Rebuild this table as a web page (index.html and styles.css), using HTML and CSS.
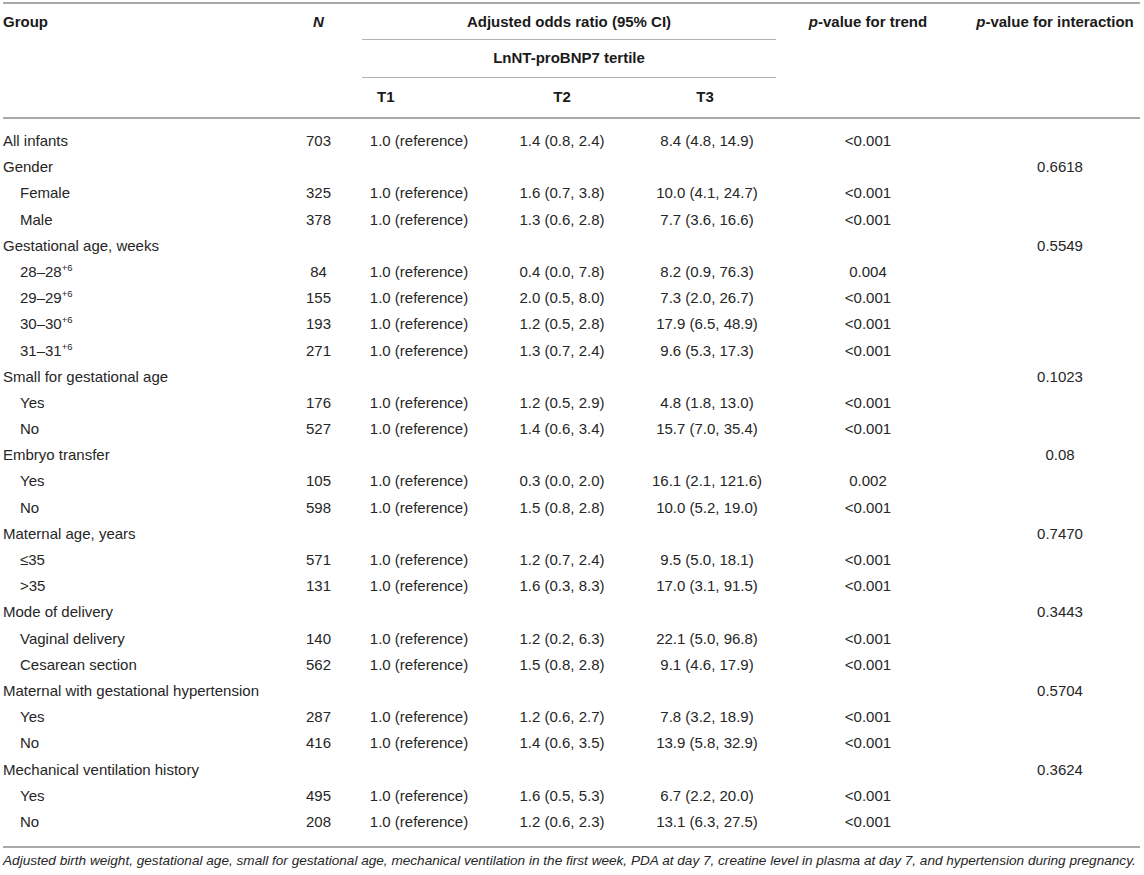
FILE: index.html
```html
<!DOCTYPE html>
<html lang="en">
<head>
<meta charset="utf-8">
<title>Adjusted odds ratio table</title>
<link rel="stylesheet" href="styles.css">
</head>
<body>
<div class="wrap">
<table class="tbl">
  <colgroup>
    <col class="c-group"><col class="c-n"><col class="c-t1"><col class="c-t2"><col class="c-t3"><col class="c-trend"><col class="c-int">
  </colgroup>
  <thead>
    <tr class="h1">
      <th rowspan="3" class="h-group">Group</th>
      <th rowspan="3" class="h-n"><i>N</i></th>
      <th colspan="3" class="h-span">Adjusted odds ratio (95% CI)</th>
      <th rowspan="3" class="h-trend"><i>p</i>-value for trend</th>
      <th rowspan="3" class="h-int"><i>p</i>-value for interaction</th>
    </tr>
    <tr class="h2">
      <th colspan="3" class="h-span">LnNT-proBNP7 tertile</th>
    </tr>
    <tr class="h3">
      <th class="h-t1">T1</th>
      <th class="h-t2">T2</th>
      <th class="h-t3">T3</th>
    </tr>
  </thead>
  <tbody>
    <tr class="first"><td class="g">All infants</td><td class="n">703</td><td class="t1">1.0 (reference)</td><td class="t2">1.4 (0.8, 2.4)</td><td class="t3">8.4 (4.8, 14.9)</td><td class="tr">&lt;0.001</td><td class="in"></td></tr>
    <tr><td class="g">Gender</td><td class="n"></td><td class="t1"></td><td class="t2"></td><td class="t3"></td><td class="tr"></td><td class="in">0.6618</td></tr>
    <tr><td class="g sub">Female</td><td class="n">325</td><td class="t1">1.0 (reference)</td><td class="t2">1.6 (0.7, 3.8)</td><td class="t3">10.0 (4.1, 24.7)</td><td class="tr">&lt;0.001</td><td class="in"></td></tr>
    <tr><td class="g sub">Male</td><td class="n">378</td><td class="t1">1.0 (reference)</td><td class="t2">1.3 (0.6, 2.8)</td><td class="t3">7.7 (3.6, 16.6)</td><td class="tr">&lt;0.001</td><td class="in"></td></tr>
    <tr><td class="g">Gestational age, weeks</td><td class="n"></td><td class="t1"></td><td class="t2"></td><td class="t3"></td><td class="tr"></td><td class="in">0.5549</td></tr>
    <tr><td class="g sub">28–28<sup>+6</sup></td><td class="n">84</td><td class="t1">1.0 (reference)</td><td class="t2">0.4 (0.0, 7.8)</td><td class="t3">8.2 (0.9, 76.3)</td><td class="tr">0.004</td><td class="in"></td></tr>
    <tr><td class="g sub">29–29<sup>+6</sup></td><td class="n">155</td><td class="t1">1.0 (reference)</td><td class="t2">2.0 (0.5, 8.0)</td><td class="t3">7.3 (2.0, 26.7)</td><td class="tr">&lt;0.001</td><td class="in"></td></tr>
    <tr><td class="g sub">30–30<sup>+6</sup></td><td class="n">193</td><td class="t1">1.0 (reference)</td><td class="t2">1.2 (0.5, 2.8)</td><td class="t3">17.9 (6.5, 48.9)</td><td class="tr">&lt;0.001</td><td class="in"></td></tr>
    <tr><td class="g sub">31–31<sup>+6</sup></td><td class="n">271</td><td class="t1">1.0 (reference)</td><td class="t2">1.3 (0.7, 2.4)</td><td class="t3">9.6 (5.3, 17.3)</td><td class="tr">&lt;0.001</td><td class="in"></td></tr>
    <tr><td class="g">Small for gestational age</td><td class="n"></td><td class="t1"></td><td class="t2"></td><td class="t3"></td><td class="tr"></td><td class="in">0.1023</td></tr>
    <tr><td class="g sub">Yes</td><td class="n">176</td><td class="t1">1.0 (reference)</td><td class="t2">1.2 (0.5, 2.9)</td><td class="t3">4.8 (1.8, 13.0)</td><td class="tr">&lt;0.001</td><td class="in"></td></tr>
    <tr><td class="g sub">No</td><td class="n">527</td><td class="t1">1.0 (reference)</td><td class="t2">1.4 (0.6, 3.4)</td><td class="t3">15.7 (7.0, 35.4)</td><td class="tr">&lt;0.001</td><td class="in"></td></tr>
    <tr><td class="g">Embryo transfer</td><td class="n"></td><td class="t1"></td><td class="t2"></td><td class="t3"></td><td class="tr"></td><td class="in">0.08</td></tr>
    <tr><td class="g sub">Yes</td><td class="n">105</td><td class="t1">1.0 (reference)</td><td class="t2">0.3 (0.0, 2.0)</td><td class="t3">16.1 (2.1, 121.6)</td><td class="tr">0.002</td><td class="in"></td></tr>
    <tr><td class="g sub">No</td><td class="n">598</td><td class="t1">1.0 (reference)</td><td class="t2">1.5 (0.8, 2.8)</td><td class="t3">10.0 (5.2, 19.0)</td><td class="tr">&lt;0.001</td><td class="in"></td></tr>
    <tr><td class="g">Maternal age, years</td><td class="n"></td><td class="t1"></td><td class="t2"></td><td class="t3"></td><td class="tr"></td><td class="in">0.7470</td></tr>
    <tr><td class="g sub">≤35</td><td class="n">571</td><td class="t1">1.0 (reference)</td><td class="t2">1.2 (0.7, 2.4)</td><td class="t3">9.5 (5.0, 18.1)</td><td class="tr">&lt;0.001</td><td class="in"></td></tr>
    <tr><td class="g sub">&gt;35</td><td class="n">131</td><td class="t1">1.0 (reference)</td><td class="t2">1.6 (0.3, 8.3)</td><td class="t3">17.0 (3.1, 91.5)</td><td class="tr">&lt;0.001</td><td class="in"></td></tr>
    <tr><td class="g">Mode of delivery</td><td class="n"></td><td class="t1"></td><td class="t2"></td><td class="t3"></td><td class="tr"></td><td class="in">0.3443</td></tr>
    <tr><td class="g sub">Vaginal delivery</td><td class="n">140</td><td class="t1">1.0 (reference)</td><td class="t2">1.2 (0.2, 6.3)</td><td class="t3">22.1 (5.0, 96.8)</td><td class="tr">&lt;0.001</td><td class="in"></td></tr>
    <tr><td class="g sub">Cesarean section</td><td class="n">562</td><td class="t1">1.0 (reference)</td><td class="t2">1.5 (0.8, 2.8)</td><td class="t3">9.1 (4.6, 17.9)</td><td class="tr">&lt;0.001</td><td class="in"></td></tr>
    <tr><td class="g">Maternal with gestational hypertension</td><td class="n"></td><td class="t1"></td><td class="t2"></td><td class="t3"></td><td class="tr"></td><td class="in">0.5704</td></tr>
    <tr><td class="g sub">Yes</td><td class="n">287</td><td class="t1">1.0 (reference)</td><td class="t2">1.2 (0.6, 2.7)</td><td class="t3">7.8 (3.2, 18.9)</td><td class="tr">&lt;0.001</td><td class="in"></td></tr>
    <tr><td class="g sub">No</td><td class="n">416</td><td class="t1">1.0 (reference)</td><td class="t2">1.4 (0.6, 3.5)</td><td class="t3">13.9 (5.8, 32.9)</td><td class="tr">&lt;0.001</td><td class="in"></td></tr>
    <tr><td class="g">Mechanical ventilation history</td><td class="n"></td><td class="t1"></td><td class="t2"></td><td class="t3"></td><td class="tr"></td><td class="in">0.3624</td></tr>
    <tr><td class="g sub">Yes</td><td class="n">495</td><td class="t1">1.0 (reference)</td><td class="t2">1.6 (0.5, 5.3)</td><td class="t3">6.7 (2.2, 20.0)</td><td class="tr">&lt;0.001</td><td class="in"></td></tr>
    <tr class="last"><td class="g sub">No</td><td class="n">208</td><td class="t1">1.0 (reference)</td><td class="t2">1.2 (0.6, 2.3)</td><td class="t3">13.1 (6.3, 27.5)</td><td class="tr">&lt;0.001</td><td class="in"></td></tr>
  </tbody>
</table>
<p class="note">Adjusted birth weight, gestational age, small for gestational age, mechanical ventilation in the first week, PDA at day 7, creatine level in plasma at day 7, and hypertension during pregnancy.</p>
</div>
</body>
</html>
```

FILE: styles.css
```css
html, body {
  margin: 0;
  padding: 0;
  background: #ffffff;
}

body {
  font-family: "Liberation Sans", Arial, Helvetica, sans-serif;
  color: #262626;
}

.wrap {
  padding: 2px 4px 0 3px;
}

.tbl {
  width: 1137px;
  table-layout: fixed;
  border-collapse: collapse;
  font-size: 15px;
  line-height: 18px;
  border-top: 2px solid #a9a9a9;
  border-bottom: 2px solid #a9a9a9;
}

.c-group { width: 292px; }
.c-n { width: 67px; }
.c-t1 { width: 114px; }
.c-t2 { width: 172px; }
.c-t3 { width: 128px; }
.c-trend { width: 184px; }
.c-int { width: 180px; }

.tbl th {
  font-weight: bold;
  vertical-align: top;
  white-space: nowrap;
  padding: 0;
  color: #1a1a1a;
}

.tbl thead {
  border-bottom: 2px solid #a9a9a9;
}

.h1 th { padding-top: 9px; }
.h1 .h-span { padding-bottom: 8px; }
.h2 .h-span { padding-top: 9px; padding-bottom: 10px; }
.h3 th { padding-top: 10px; padding-bottom: 11px; }

.h-span {
  text-align: center;
  border-bottom: 1px solid #b3b3b3;
}

.h-group { text-align: left; }
.h-n { text-align: center; padding-right: 20px !important; }
.h-t1 { text-align: left; padding-left: 15px !important; }
.h-t2 { text-align: center; }
.h-t3 { text-align: center; padding-right: 14px !important; }
.h-trend { text-align: center; }
.h-int { text-align: center; padding-left: 10px !important; }

.tbl td {
  padding: 4.1px 0;
  white-space: nowrap;
  vertical-align: middle;
}

.tbl tr.first td { padding-top: 13px; }
.tbl tr.last td { padding-bottom: 15px; }

.g { text-align: left; }
.g.sub { padding-left: 17px !important; }
.n { text-align: center; padding-right: 20px !important; }
.t1 { text-align: center; }
.t2 { text-align: center; }
.t3 { text-align: center; padding-right: 10px !important; }
.tr { text-align: center; }
.in { text-align: center; padding-left: 20px !important; }

sup {
  font-size: 9.5px;
  line-height: 0;
  vertical-align: 6px;
}

.note {
  margin: 5px 0 0 0;
  font-size: 13.6px;
  line-height: 16px;
  font-style: italic;
  color: #262626;
  white-space: nowrap;
}
```
